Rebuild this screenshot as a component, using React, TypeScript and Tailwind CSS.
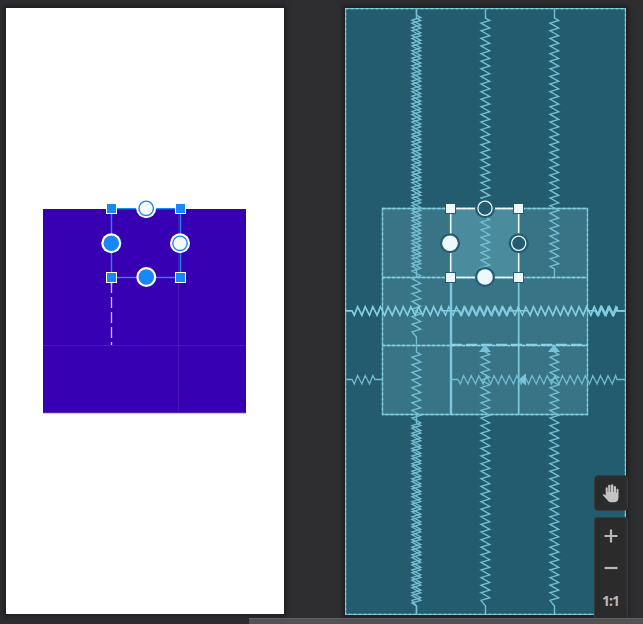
import React from 'react';

type Spring = { at: number; from: number; to: number; lead?: number; tail?: number; strong?: boolean };

const verticalSprings: Spring[] = [
  { at: 71, from: 0, to: 269, lead: 10 },
  { at: 71, from: 0, to: 337, lead: 7 },
  { at: 71, from: 337, to: 606, lead: 7 },
  { at: 71, from: 406, to: 606, lead: 9 },
  { at: 140, from: 0, to: 201 },
  { at: 140, from: 201, to: 269, lead: 8 },
  { at: 140, from: 337, to: 606, lead: 7 },
  { at: 209, from: 0, to: 269 },
  { at: 209, from: 337, to: 606, lead: 7 },
];

const horizontalSprings: Spring[] = [
  { at: 302.8, from: 0, to: 106, lead: 7, strong: true },
  { at: 302.8, from: 0, to: 174, lead: 7, strong: true },
  { at: 302.8, from: 106, to: 281, lead: 8.4, strong: true },
  { at: 302.8, from: 174, to: 281, lead: 8.8, strong: true },
  { at: 302.8, from: 243, to: 281, lead: 7, strong: true },
  { at: 371.5, from: 0, to: 37, lead: 7, tail: 7 },
  { at: 371.5, from: 106, to: 281, lead: 7 },
];

function springPath(s: Spring, vertical: boolean) {
  const point = (along: number, offset: number) =>
    vertical ? `${s.at + offset + 0.5},${along}` : `${along},${s.at - offset}`;
  const start = s.from + (s.lead ?? 10);
  const end = s.to - (s.tail ?? (vertical ? 8 : 9));
  const pts = [point(s.from, 0), point(start, 0)];
  const period = 7.6;
  const low = vertical ? 5.2 : 2.3;
  const high = vertical ? 2.5 : 5.6;
  for (let p = start; p + 5.6 <= end; p += period) {
    if (vertical) {
      pts.push(point(p + high, 4.2), point(p + low, -4.5));
    } else {
      pts.push(point(p + low, -4.5), point(p + high, 4));
    }
  }
  pts.push(point(end, 0), point(s.to, 0));
  return 'M' + pts.join(' L');
}

function Square({ x, y, fill, stroke }: { x: number; y: number; fill: string; stroke: string }) {
  return <rect x={x - 5} y={y - 5} width="10" height="10" fill={fill} stroke={stroke} />;
}

function DesignSurface() {
  return (
    <div className="h-[606px] w-[278px] shrink-0 bg-white shadow-[0_0_5px_2px_#1c1c1f]">
      <svg width="278" height="606" viewBox="0 0 278 606" fill="none">
        <rect x="37" y="201" width="203" height="204" fill="#3800b3" />
        <path d="M37 405.3H240" stroke="#c9b8ed" />
        <path d="M37 337.5H240M172.5 201V405" stroke="#4818ba" />
        <path d="M105.5 270V337" stroke="#d1c2ef" strokeWidth="1.3" strokeDasharray="11 4" strokeDashoffset="-4" />
        <path d="M105.5 270V278" stroke="#d1c2ef" strokeWidth="1.3" />
        <rect x="105.5" y="200.7" width="69" height="68.8" stroke="#2086f5" strokeWidth="1.4" />
        {[[105.5, 200.5], [174.5, 200.5], [105.5, 269.5], [174.5, 269.5]].map(([x, y]) => (
          <Square key={`${x}-${y}`} x={x} y={y} fill="#1887fa" stroke="white" />
        ))}
        {[[140.2, 200.3], [174, 235.3]].map(([x, y]) => (
          <g key={x}>
            <circle cx={x} cy={y} r="10" fill="white" />
            <circle cx={x} cy={y} r="7.2" fill="#f8f9fb" stroke="#1887fa" strokeWidth="1.4" />
          </g>
        ))}
        {[[105.3, 235.3], [140.3, 269]].map(([x, y]) => (
          <g key={x}>
            <circle cx={x} cy={y} r="10" fill="white" />
            <circle cx={x} cy={y} r="7.8" fill="#1887fa" />
          </g>
        ))}
      </svg>
    </div>
  );
}

function BlueprintSurface() {
  return (
    <div className="h-[607px] w-[281px] shrink-0 bg-[#235c6f] shadow-[0_0_5px_2px_#1c1c1f]">
      <svg width="281" height="607" viewBox="0 0 281 607" fill="none">
        <rect x="37" y="200" width="206" height="206" fill="#387386" />
        <rect x="106" y="200" width="68" height="69" fill="#4a8b9e" />
        <g stroke="#69b7cb" strokeWidth="1.3">
          <rect x="0.5" y="0.5" width="280" height="606" />
          <path d="M37.5 200.5H242.5V406.5H37.5ZM37 269.5H243M37 337.5H243" />
        </g>
        <g stroke="#88d1e3" strokeWidth="1.3" strokeDasharray="3 2">
          <rect x="0.5" y="0.5" width="280" height="606" />
          <path d="M37.5 200.5H242.5V406.5H37.5ZM37 269.5H243M37 337.5H243" />
        </g>
        <path d="M106 269V406" stroke="#7bc7dd" strokeWidth="2.4" />
        <path d="M173.7 269V406" stroke="#7cc7da" strokeWidth="1.8" />
        <path d="M106 336.8H243" stroke="#8bd4e6" strokeWidth="2" strokeDasharray="11 4" />
        <g stroke="#75bed2" strokeWidth="1.4">
          {verticalSprings.map((s, i) => <path key={i} d={springPath(s, true)} />)}
        </g>
        {horizontalSprings.map((s, i) => (
          <path key={i} d={springPath(s, false)} stroke={s.strong ? '#82cde0' : '#73bbcf'} strokeWidth={s.strong ? 1.4 : 1.3} />
        ))}
        <path d="M140 336.5l6 7.5h-12ZM209 336.5l6 7.5h-12ZM173.5 371.5l7.5-6v12Z" fill="#79c3d8" />
        <rect x="105.7" y="200.5" width="68" height="69" stroke="#edf9ff" strokeWidth="1.6" />
        {[[105.5, 200.5], [173.5, 200.5], [105.5, 269.5], [173.5, 269.5]].map(([x, y]) => (
          <Square key={`${x}-${y}`} x={x} y={y} fill="#edf9ff" stroke="#235c6f" />
        ))}
        {[[140, 200.3], [173.7, 235.3]].map(([x, y]) => (
          <g key={x}>
            <circle cx={x} cy={y} r="10" fill="#235c6f" />
            <circle cx={x} cy={y} r="7.1" stroke="#edf9ff" strokeWidth="1.3" />
          </g>
        ))}
        {[[105, 235.3], [140, 269]].map(([x, y]) => (
          <g key={x}>
            <circle cx={x} cy={y} r="10" fill="#235c6f" />
            <circle cx={x} cy={y} r="7.8" fill="#edf9ff" />
          </g>
        ))}
      </svg>
    </div>
  );
}

function ZoomControls() {
  return (
    <div className="absolute top-[475px] left-[594px] flex w-[34px] flex-col gap-[6px]">
      <button className="flex h-[36px] items-center justify-center rounded-[4px] border border-[#3a3a3b] bg-[#2b2b2b] pr-[2px]">
        <svg width="17" height="19" viewBox="0 0 17 19" fill="#c3c3c3">
          <path d="M3.7 11.5V4.2a1 1 0 0 1 2 0V8h.5V1.8a1 1 0 0 1 2.3 0V8h.5V1.5a1 1 0 0 1 2.3 0V8h.5V3a1 1 0 0 1 2.2 0v5.7h.5V5.8a1 1 0 0 1 2 0v7.6c0 3.2-1.8 4.9-4.5 4.9H9.7c-2 0-3.2-.7-4.2-2.1L.5 10.8c.8-.9 1.8-.7 3.2.7Z" />
        </svg>
      </button>
      <div className="flex h-[101px] flex-col items-center rounded-t-[4px] border border-b-0 border-[#3a3a3b] bg-[#2b2b2b]">
        <button className="flex h-[36px] shrink-0 items-center">
          <svg width="14" height="14" stroke="#b8b8b8" strokeWidth="2.2"><path d="M7 .5v13M.5 7h13" /></svg>
        </button>
        <button className="flex h-[28px] shrink-0 items-center">
          <svg width="14" height="14" stroke="#b8b8b8" strokeWidth="2.2"><path d="M.5 7h13" /></svg>
        </button>
        <button className="flex h-[38px] shrink-0 items-center pr-px font-['Noto_Sans',sans-serif] text-[14px] leading-none font-bold tracking-[-1px] text-[#bababa]">1:1</button>
      </div>
    </div>
  );
}

export default function App() {
  return (
    <main className="relative flex h-[624px] w-[643px] flex-col overflow-hidden bg-[#2e2e30]">
      <div className="flex h-[618px] gap-[61px] pt-[8px] pl-[6px]">
        <DesignSurface />
        <BlueprintSurface />
      </div>
      <ZoomControls />
      <div className="relative ml-[249px] h-[6px] shrink-0 border-t border-[#606062] bg-[#525255]" />
    </main>
  );
}
